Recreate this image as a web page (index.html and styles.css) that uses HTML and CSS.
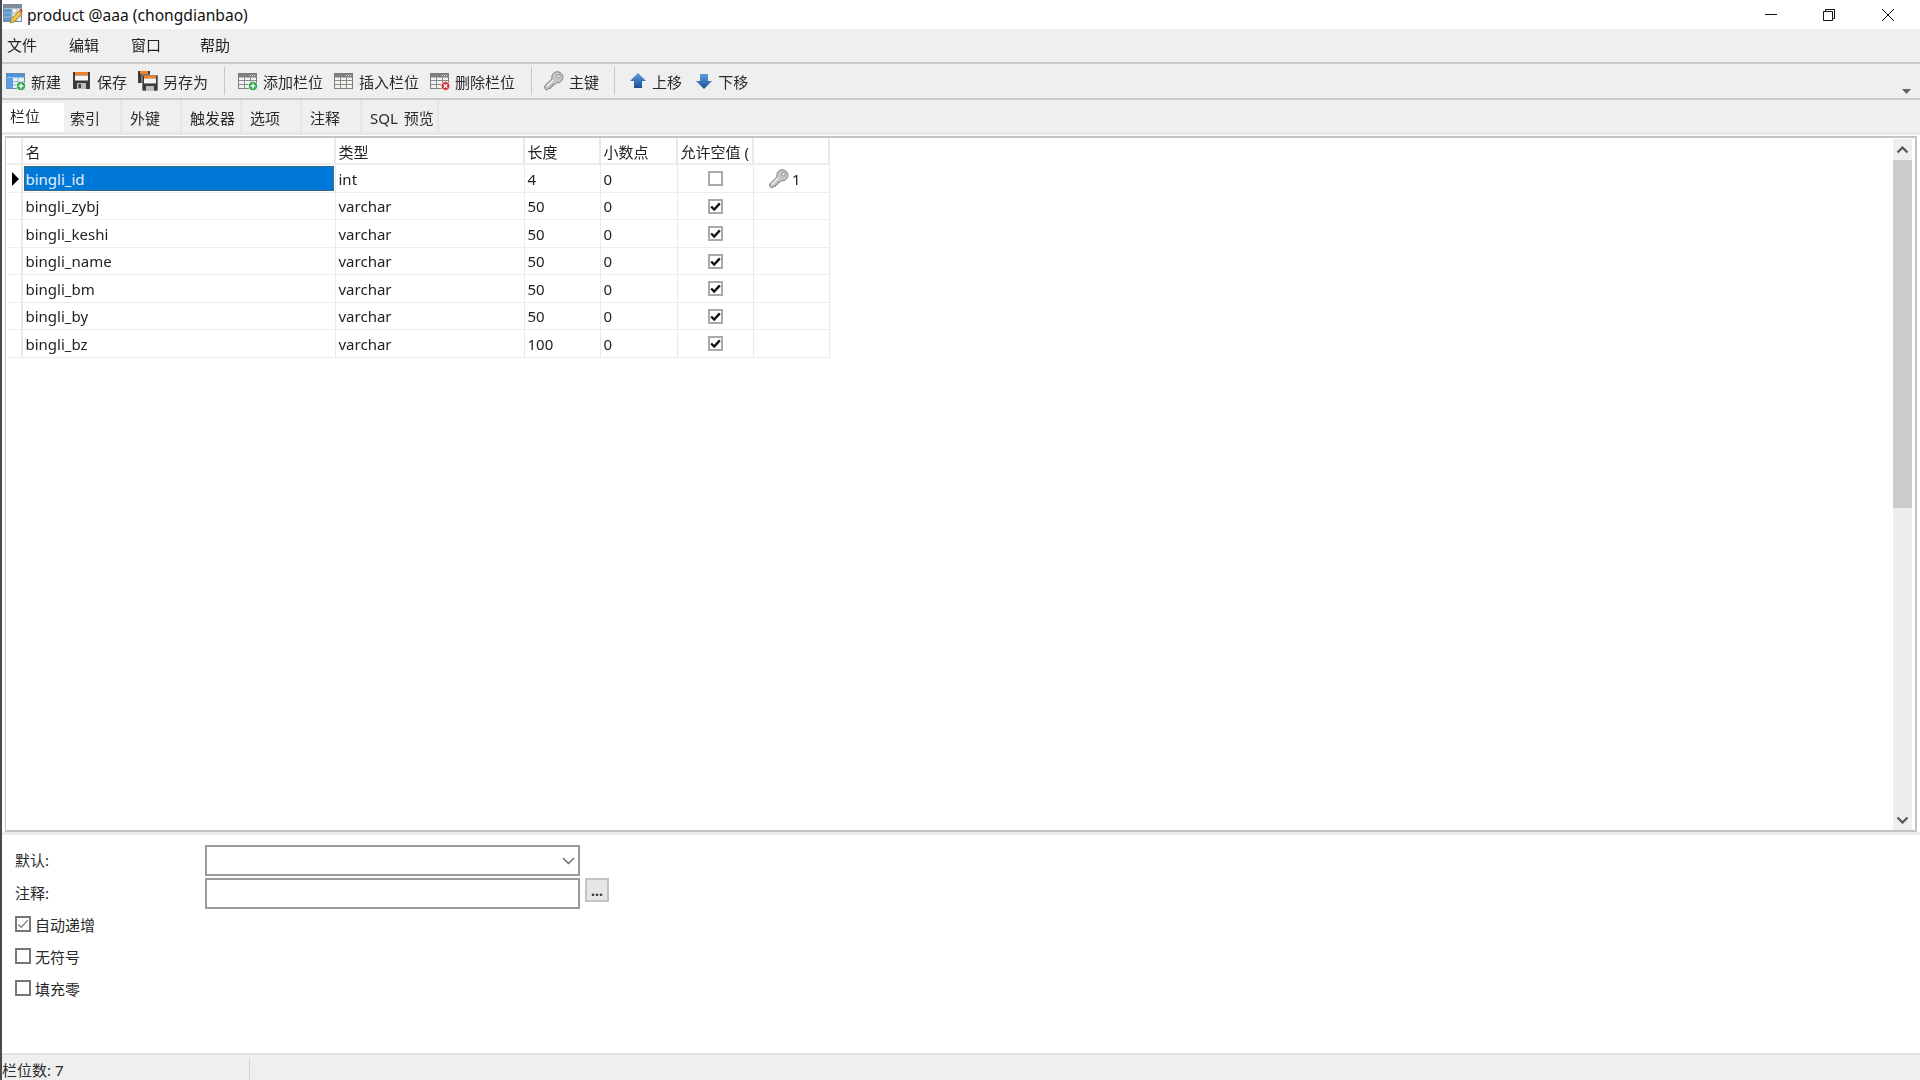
FILE: index.html
```html
<!DOCTYPE html>
<html lang="zh">
<head>
<meta charset="utf-8">
<title>product @aaa (chongdianbao)</title>
<link rel="stylesheet" href="styles.css">
</head>
<body>
<svg class="defs" width="0" height="0" aria-hidden="true">
  <defs>
    <linearGradient id="arrowBlue" x1="0" y1="0" x2="0" y2="1">
      <stop offset="0" stop-color="#5b9ce0"/><stop offset="1" stop-color="#1d4f96"/>
    </linearGradient>
    <symbol id="grayTable" viewBox="0 0 20 20">
      <rect x="0.5" y="2.5" width="18" height="15" fill="#f4f2ee" stroke="#7c7c7c"/>
      <rect x="1" y="3" width="17" height="3.500" fill="#7d7d7d"/>
      <path d="M1 9.500h17M1 13.500h17M6.500 6.500v11M12.500 6.500v11" stroke="#8c8c8c" fill="none"/>
      <path d="M12 4.500h1M14 4.500h1M16 4.500h1" stroke="#eee" fill="none"/>
    </symbol>
    <symbol id="key" viewBox="0 0 20 20">
      <path d="M12.500.8c3.400-.5 6.500 2.300 6.400 5.700-.1 3.300-3.200 5.800-6.300 5.200l-1.700 1.700-1.900-.1-.1 1.900-1.900.1-.1 1.900-2.100.2-2.200 1.800L.6 16.900l.2-2.200L8 7.800C7.300 4.300 9.200 1.400 12.500.8z" fill="#c4c4c4" stroke="#7f7f7f" stroke-width="1"/>
      <circle cx="14.500" cy="5.200" r="1.700" fill="#f4f4f4" stroke="#7f7f7f" stroke-width=".8"/>
      <path d="M3 15.500l6.500-6.500" stroke="#f2f2f2" stroke-width="1.200" fill="none"/>
    </symbol>
    <symbol id="check" viewBox="0 0 14 14">
      <path d="M1.500 7l3.800 3.800L12.500 3" fill="none" stroke="#111" stroke-width="3"/>
    </symbol>
    <symbol id="floppy" viewBox="0 0 20 20">
      <rect x="1" y="1" width="17" height="17" fill="#3c3c3c"/>
      <rect x="3" y="1" width="13" height="3.500" fill="#f0802a"/>
      <rect x="3" y="4.500" width="13" height="5" fill="#f5f5f5"/>
      <rect x="5" y="12" width="9" height="6" fill="#bdbdbd"/>
      <rect x="6.500" y="13" width="2.500" height="4" fill="#3c3c3c"/>
    </symbol>
  </defs>
</svg>

<header class="titlebar">
  <svg class="app-icon" viewBox="0 0 20 20" width="20" height="20">
    <rect x="0.5" y="0.5" width="18" height="17" fill="#eef3f8" stroke="#7b8794"/>
    <rect x="1" y="1" width="17" height="3.500" fill="#7e8c9c"/>
    <rect x="1" y="5" width="8" height="12" fill="#5a9ad6"/>
    <path d="M1 9h17M1 13h17M9 5v12M14 5v12" stroke="#a9b6c4" fill="none"/>
    <path d="M7 19l1-4 8-8 3 3-8 8z" fill="#e8c14a" stroke="#8a6d20" stroke-width=".7"/>
    <path d="M16 6l1.500-1.500 2.500 2.500L18.500 9z" fill="#e0503c"/>
  </svg>
  <span class="title-text">product @aaa (chongdianbao)</span>
  <div class="win-controls">
    <span class="win-btn"><svg width="14" height="14" viewBox="0 0 14 14"><path d="M1 6.500h12" stroke="#111" fill="none"/></svg></span>
    <span class="win-btn"><svg width="14" height="14" viewBox="0 0 14 14"><path d="M1.500 3.500h9v9h-9zM3.500 3.500v-2h9v9h-2" stroke="#111" fill="none"/></svg></span>
    <span class="win-btn"><svg width="14" height="14" viewBox="0 0 14 14"><path d="M1 1l12 12M13 1L1 13" stroke="#111" fill="none"/></svg></span>
  </div>
</header>

<nav class="menubar">
  <span class="menu-item">文件</span>
  <span class="menu-item">编辑</span>
  <span class="menu-item menu-item-wide">窗口</span>
  <span class="menu-item">帮助</span>
</nav>

<div class="toolbar">
  <span class="tool">
    <svg class="tool-icon" viewBox="0 0 20 20">
      <rect x="0.5" y="2.5" width="18" height="15" fill="#e9eff6" stroke="#6d8cab"/>
      <rect x="1" y="3" width="17" height="3.500" fill="#4b93d8"/>
      <rect x="1" y="7" width="6" height="10" fill="#5aa0e0"/>
      <path d="M7 10.500h11M7 14h11M12 7v10" stroke="#9fb4c9" fill="none"/>
      <circle cx="15" cy="15" r="4.600" fill="#2fa84f" stroke="#fff" stroke-width=".7"/>
      <path d="M12.600 15h4.800M15 12.600v4.800" stroke="#fff" stroke-width="1.500"/>
    </svg>新建</span>
  <span class="tool">
    <svg class="tool-icon"><use href="#floppy"/></svg>保存</span>
  <span class="tool">
    <svg class="tool-icon" viewBox="0 0 20 20">
      <rect x="0" y="0" width="12" height="12" fill="#3c3c3c"/>
      <rect x="2" y="0" width="8" height="3" fill="#f0802a"/>
      <rect x="4" y="4" width="16" height="16" fill="#3c3c3c" stroke="#fff" stroke-width=".6"/>
      <rect x="6" y="4.400" width="12" height="3" fill="#f0802a"/>
      <rect x="6" y="7.400" width="12" height="5" fill="#f5f5f5"/>
      <rect x="8" y="15" width="8" height="5" fill="#bdbdbd"/>
    </svg>另存为</span>
  <span class="tool-sep tool-sep-wide"></span>
  <span class="tool">
    <svg class="tool-icon" viewBox="0 0 20 20">
      <use href="#grayTable" width="20" height="20"/>
      <circle cx="15" cy="15" r="4.600" fill="#2fa84f" stroke="#fff" stroke-width=".7"/>
      <path d="M12.600 15h4.800M15 12.600v4.800" stroke="#fff" stroke-width="1.500"/>
    </svg>添加栏位</span>
  <span class="tool">
    <svg class="tool-icon"><use href="#grayTable"/></svg>插入栏位</span>
  <span class="tool">
    <svg class="tool-icon" viewBox="0 0 20 20">
      <use href="#grayTable" width="20" height="20"/>
      <circle cx="15.500" cy="15" r="4.400" fill="#d5303a" stroke="#fff" stroke-width=".7"/>
      <path d="M13.800 13.300l3.400 3.400M17.200 13.300l-3.400 3.400" stroke="#fff" stroke-width="1.300"/>
    </svg>删除栏位</span>
  <span class="tool-sep"></span>
  <span class="tool">
    <svg class="tool-icon"><use href="#key"/></svg>主键</span>
  <span class="tool-sep tool-sep-tight"></span>
  <span class="tool tool-arrow">
    <svg class="arrow-icon" viewBox="0 0 16 16"><path d="M8 0l8 8h-4v7H4V8H0z" fill="url(#arrowBlue)"/></svg>上移</span>
  <span class="tool tool-arrow">
    <svg class="arrow-icon" viewBox="0 0 16 16"><path d="M4 1h8v7h4l-8 8-8-8h4z" fill="url(#arrowBlue)"/></svg>下移</span>
  <svg class="toolbar-more" width="9" height="5" viewBox="0 0 9 5"><path d="M0 0h9L4.500 5z" fill="#666"/></svg>
</div>

<div class="tabs">
  <span class="tab tab-active">栏位</span>
  <span class="tab">索引</span>
  <span class="tab">外键</span>
  <span class="tab">触发器</span>
  <span class="tab">选项</span>
  <span class="tab">注释</span>
  <span class="tab tab-last">SQL 预览</span>
</div>

<main class="grid-panel">
  <div class="grid-wrap">
    <div class="grid">
      <div class="cell head"></div><div class="cell head">名</div><div class="cell head">类型</div><div class="cell head">长度</div><div class="cell head">小数点</div><div class="cell head">允许空值 (</div><div class="cell head"></div>

      <div class="cell rowhead"><svg width="7" height="14" viewBox="0 0 7 14"><path d="M0 0l7 7-7 7z" fill="#000"/></svg></div>
      <div class="cell"><span class="selected">bingli_id</span></div><div class="cell">int</div><div class="cell">4</div><div class="cell">0</div>
      <div class="cell center"><span class="grid-check"></span></div>
      <div class="cell key-cell"><svg class="key-icon"><use href="#key"/></svg>1</div>

      <div class="cell rowhead"></div><div class="cell">bingli_zybj</div><div class="cell">varchar</div><div class="cell">50</div><div class="cell">0</div>
      <div class="cell center"><span class="grid-check"><svg width="11" height="11"><use href="#check"/></svg></span></div><div class="cell"></div>

      <div class="cell rowhead"></div><div class="cell">bingli_keshi</div><div class="cell">varchar</div><div class="cell">50</div><div class="cell">0</div>
      <div class="cell center"><span class="grid-check"><svg width="11" height="11"><use href="#check"/></svg></span></div><div class="cell"></div>

      <div class="cell rowhead"></div><div class="cell">bingli_name</div><div class="cell">varchar</div><div class="cell">50</div><div class="cell">0</div>
      <div class="cell center"><span class="grid-check"><svg width="11" height="11"><use href="#check"/></svg></span></div><div class="cell"></div>

      <div class="cell rowhead"></div><div class="cell">bingli_bm</div><div class="cell">varchar</div><div class="cell">50</div><div class="cell">0</div>
      <div class="cell center"><span class="grid-check"><svg width="11" height="11"><use href="#check"/></svg></span></div><div class="cell"></div>

      <div class="cell rowhead"></div><div class="cell">bingli_by</div><div class="cell">varchar</div><div class="cell">50</div><div class="cell">0</div>
      <div class="cell center"><span class="grid-check"><svg width="11" height="11"><use href="#check"/></svg></span></div><div class="cell"></div>

      <div class="cell rowhead"></div><div class="cell">bingli_bz</div><div class="cell">varchar</div><div class="cell">100</div><div class="cell">0</div>
      <div class="cell center"><span class="grid-check"><svg width="11" height="11"><use href="#check"/></svg></span></div><div class="cell"></div>
    </div>
  </div>
  <div class="scrollbar">
    <span class="sb-btn"><svg width="13" height="8" viewBox="0 0 13 8"><path d="M1.500 6.500l5-5 5 5" fill="none" stroke="#555" stroke-width="2.200"/></svg></span>
    <span class="sb-thumb"></span>
    <span class="sb-track"></span>
    <span class="sb-btn"><svg width="13" height="8" viewBox="0 0 13 8"><path d="M1.500 1.500l5 5 5-5" fill="none" stroke="#555" stroke-width="2.200"/></svg></span>
  </div>
</main>

<section class="form">
  <div class="form-row">
    <label class="form-label">默认:</label>
    <div class="field">
      <svg width="13" height="8" viewBox="0 0 13 8"><path d="M1 1l5.500 5.500L12 1" fill="none" stroke="#666" stroke-width="1.400"/></svg>
    </div>
  </div>
  <div class="form-row">
    <label class="form-label">注释:</label>
    <div class="field"></div>
    <span class="more-btn">...</span>
  </div>
  <div class="form-checks">
    <div class="check-row">
      <span class="form-check"><svg width="14" height="14" viewBox="0 0 14 14"><path d="M1.500 7.500l3.500 3.500L12.500 2.500" fill="none" stroke="#777" stroke-width="1.500"/></svg></span>自动递增
    </div>
    <div class="check-row"><span class="form-check"></span>无符号</div>
    <div class="check-row"><span class="form-check"></span>填充零</div>
  </div>
</section>

<footer class="statusbar">
  <span class="status-cell">栏位数: 7</span>
</footer>
</body>
</html>
```

FILE: styles.css
```css
* { box-sizing: border-box; }

html, body { height: 100%; }

body {
  margin: 0;
  height: 1080px;
  overflow: hidden;
  display: flex;
  flex-direction: column;
  background: #fff;
  border-left: 2px solid #4a4a4a;
  font-family: "Noto Sans", "Noto Sans CJK SC", sans-serif;
  font-size: 15px;
  color: #222;
  filter: blur(0.35px);
}

.defs { position: absolute; }

.titlebar {
  height: 29px;
  flex: none;
  display: flex;
  align-items: center;
  background: #fff;
  padding-left: 1px;
  color: #111;
}

.app-icon { flex: none; margin-top: -2px; }

.title-text { margin-left: 4px; font-size: 15.6px; }

.win-controls { margin-left: auto; display: flex; padding-right: 3px; }

.win-btn {
  width: 58.5px;
  height: 29px;
  display: flex;
  align-items: center;
  justify-content: center;
}

.menubar {
  height: 35px;
  flex: none;
  display: flex;
  align-items: center;
  gap: 32px;
  padding: 0 0 2px 5px;
  background: #efefef;
  border-bottom: 2px solid #c9c9c9;
}

.menu-item-wide { margin-right: 7px; }

.toolbar {
  height: 36px;
  flex: none;
  display: flex;
  align-items: center;
  padding-left: 4px;
  gap: 11px;
  background: #efefef;
  border-bottom: 2px solid #c9c9c9;
  position: relative;
}

.tool { display: flex; align-items: center; gap: 5px; color: #2a2a2a; }

.tool-icon { width: 20px; height: 20px; flex: none; }

.arrow-icon { width: 16px; height: 16px; flex: none; }

.tool-arrow { gap: 6px; margin-left: 3px; }

.tool-sep {
  width: 1px;
  height: 28px;
  margin: 0 1px 0 5px;
  background: #c6c6c6;
}

.tool-sep-wide { margin-right: 2px; }

.tool-sep-tight { margin-left: 4px; }

.toolbar-more { position: absolute; right: 9px; bottom: 4px; }

.tabs {
  height: 35px;
  flex: none;
  display: flex;
  align-items: stretch;
  background: #efefef;
  border-bottom: 3px solid #e8e8e8;
}

.tab {
  width: 60px;
  padding: 3px 0 0 8px;
  border-right: 2px solid #e6e6e6;
  display: flex;
  align-items: center;
  color: #2a2a2a;
}

.tab-active {
  width: 62px;
  margin-top: 3px;
  padding: 0 0 5px 8px;
  background: #fff;
  border-right: none;
}

.tab-active + .tab { width: 58px; padding-left: 6px; }

.tab-last { width: 77px; word-spacing: 2px; }

.grid-panel {
  flex: none;
  height: 696px;
  margin: 1px 3px 0 3px;
  display: flex;
  border: 2px solid #c3c3ca;
  border-left-width: 1px;
  background: #fff;
}

.grid-wrap { flex: 1; min-width: 0; }

.grid {
  display: grid;
  grid-template-columns: 16px 313px 189px 76px 77px 76px 76px;
  grid-template-rows: 27px repeat(7, 27.5px);
  width: 823px;
  margin-left: 1px;
}

.cell {
  display: flex;
  align-items: center;
  padding: 1px 0 0 2.5px;
  border-right: 1px solid #e9e9e9;
  border-bottom: 1px solid #ededed;
  white-space: nowrap;
  overflow: hidden;
  color: #222;
}

.head { border-bottom-width: 2px; border-right-width: 2px; }

.rowhead { padding-left: 5px; border-right-width: 2px; }

.center { justify-content: center; padding-left: 0; }

.selected {
  flex: 1;
  height: 25px;
  margin: -1px 1px 0 -1.5px;
  padding: 2px 0 0 1.5px;
  display: flex;
  align-items: center;
  background: #0078d7;
  color: #e6effa;
  outline: 1px dotted #7a5a20;
  outline-offset: -1px;
}

.grid-check {
  width: 15px;
  height: 15px;
  border: 2px solid #a9a9a9;
  background: #fff;
  display: flex;
  align-items: center;
  justify-content: center;
}

.key-cell { padding-left: 15px; gap: 3px; }

.key-icon { width: 20px; height: 20px; flex: none; }

.scrollbar {
  flex: none;
  width: 19px;
  margin: 1px 3px 0 0;
  display: flex;
  flex-direction: column;
  background: #eee;
}

.sb-btn {
  height: 21px;
  flex: none;
  display: flex;
  align-items: center;
  justify-content: center;
}

.sb-thumb { height: 348px; flex: none; background: #cbcbcb; }

.sb-track { flex: 1; }

.form {
  flex: 1;
  min-height: 0;
  background: #fff;
  border-top: 3px solid #ececec;
  padding: 10px 0 0 13px;
  display: flex;
  flex-direction: column;
  gap: 2px;
}

.form-row { display: flex; align-items: flex-start; }

.form-label { width: 190px; flex: none; line-height: 30px; color: #2a2a2a; }

.field {
  width: 375px;
  height: 31px;
  flex: none;
  border: 2px solid #9a9a9a;
  background: #fff;
  display: flex;
  align-items: center;
  justify-content: flex-end;
  padding-right: 3px;
}

.more-btn {
  width: 24px;
  height: 24px;
  margin-left: 5px;
  border: 2px solid #c4c4c4;
  background: #e6e6e6;
  display: flex;
  align-items: center;
  justify-content: center;
  font-size: 14px;
  font-weight: 700;
  color: #333;
}

.form-checks {
  margin-top: 5px;
  display: flex;
  flex-direction: column;
  gap: 16px;
}

.check-row { height: 16px; display: flex; align-items: center; gap: 4px; color: #2a2a2a; }

.form-check {
  width: 16px;
  height: 16px;
  flex: none;
  border: 2px solid #777;
  background: #fff;
  display: flex;
  align-items: center;
  justify-content: center;
}

.statusbar {
  height: 27px;
  flex: none;
  display: flex;
  background: #efefef;
  border-top: 2px solid #e2e2e2;
}

.status-cell {
  width: 248px;
  height: 22px;
  margin-top: 3px;
  display: flex;
  align-items: center;
  border-right: 1px solid #d4d4d4;
  color: #2a2a2a;
}
```
